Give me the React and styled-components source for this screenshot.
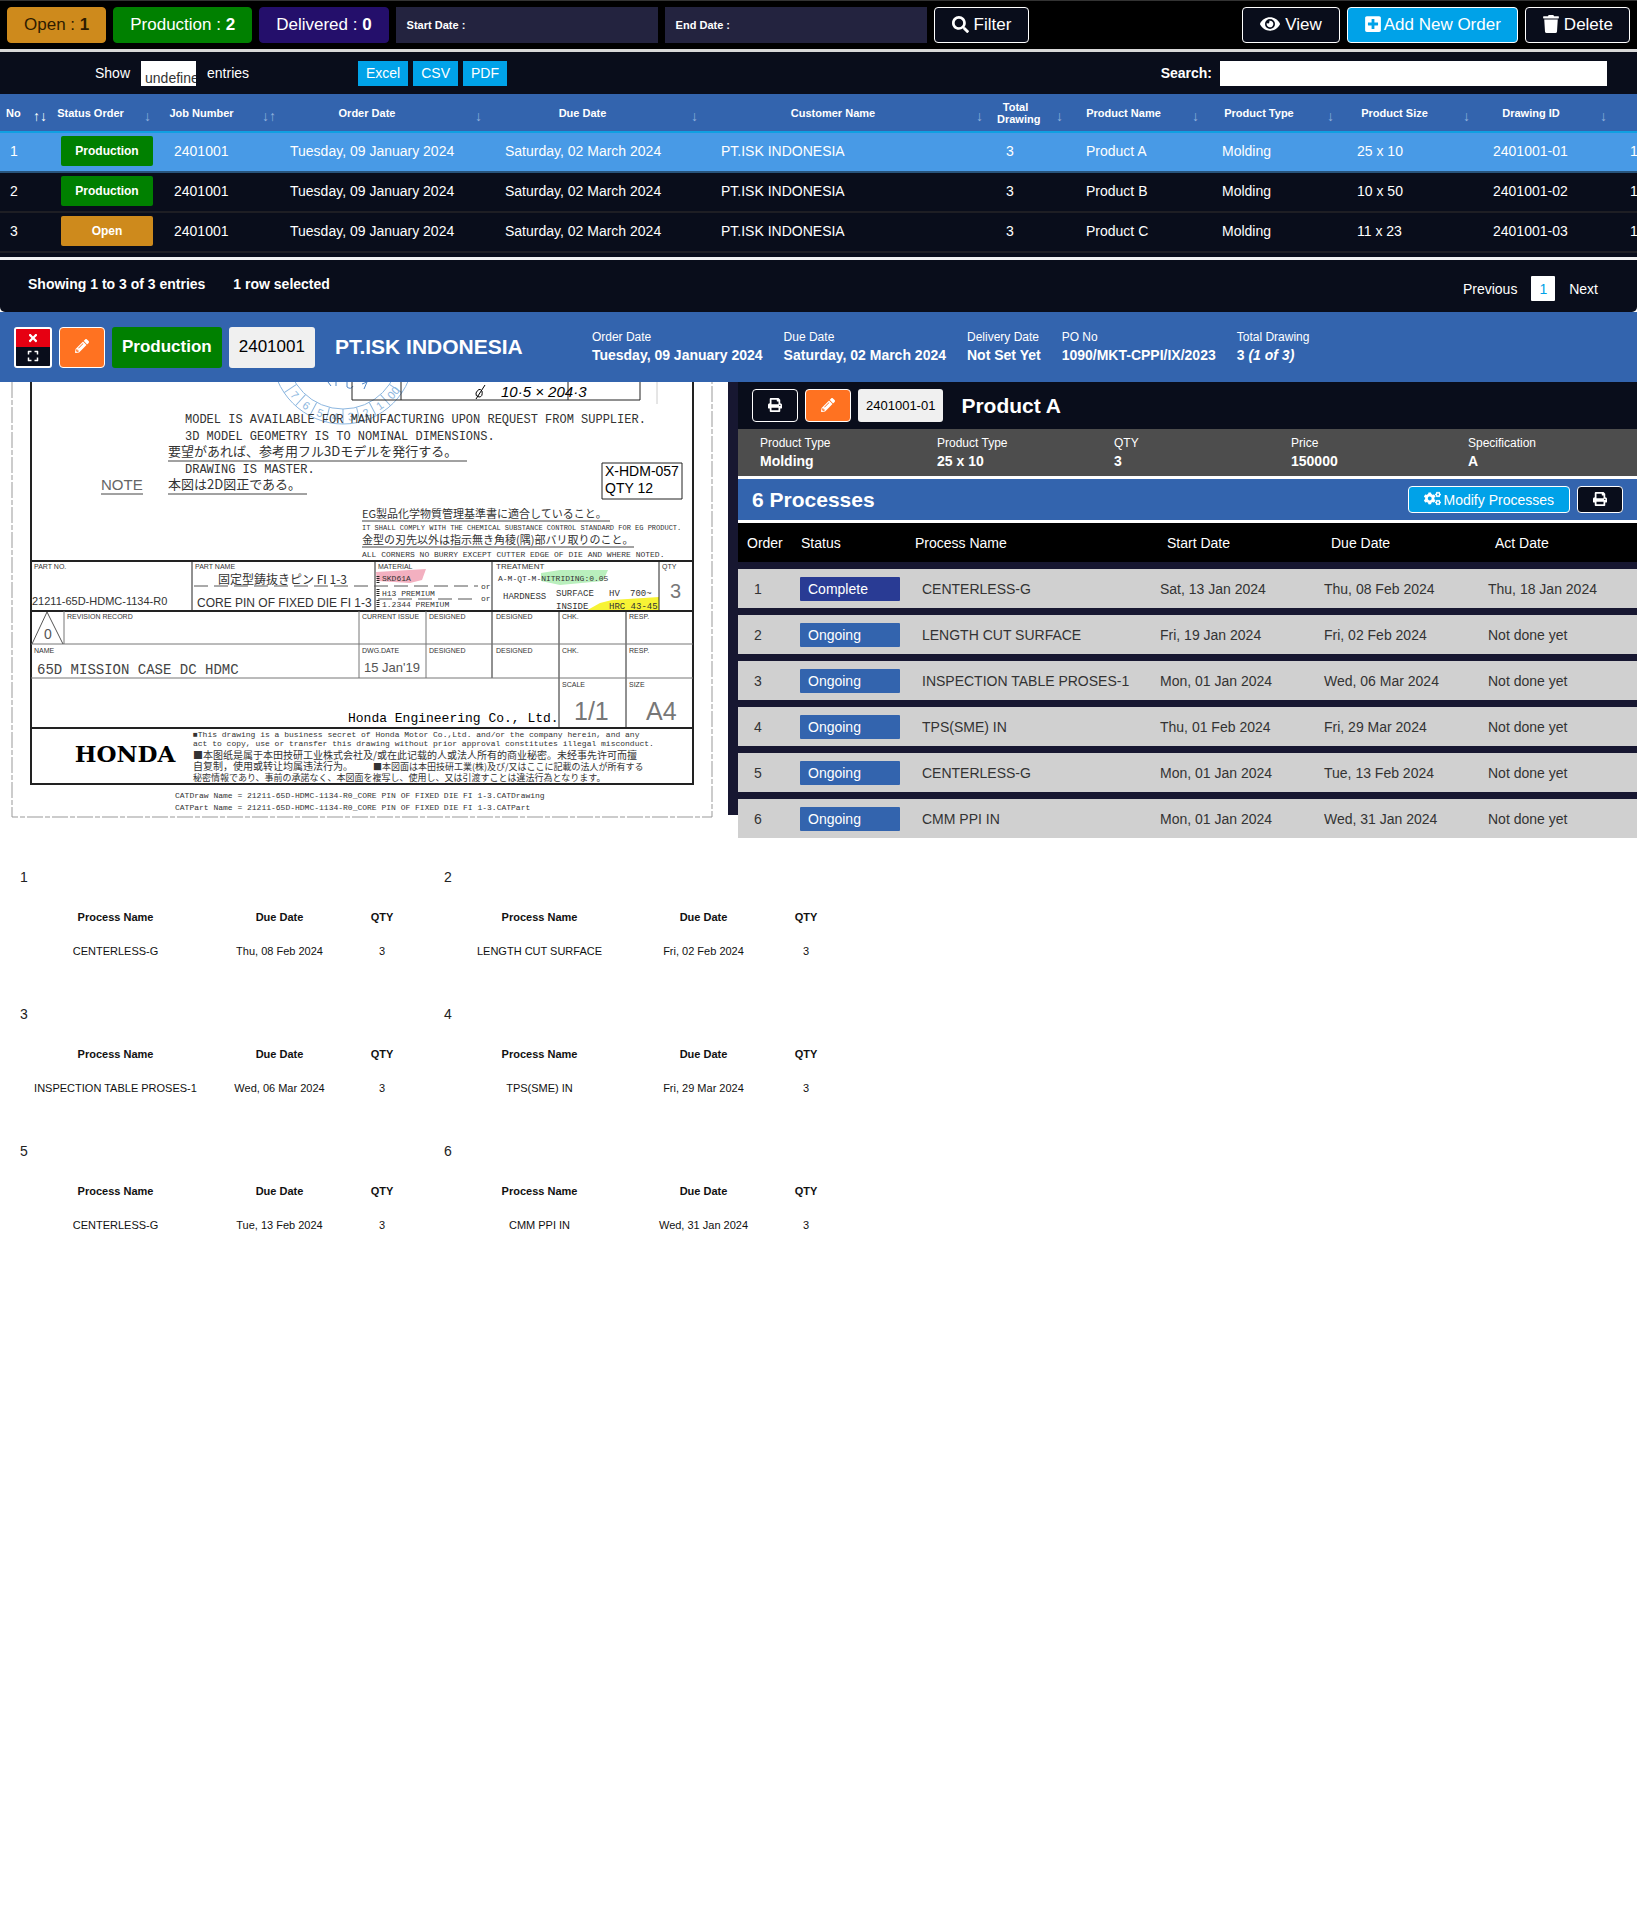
import React from "react";
import styled, { createGlobalStyle, css } from "styled-components";
import {
  FaSearch,
  FaEye,
  FaPlusSquare,
  FaTrash,
  FaPencilAlt,
  FaPrint,
  FaCogs,
  FaTimes,
  FaExpand,
} from "react-icons/fa";

const color = {
  night: "#090d1b",
  shade: "#171731",
  blue: "#3364ae",
  sky: "#00a2e8",
  orange: "#ff7221",
  green: "#008000",
  amber: "#ce8a1c",
  indigo: "#293b94",
  chip: "#f0f0f0",
};

const GlobalStyle = createGlobalStyle`
  * { box-sizing: border-box; }
  body {
    margin: 0;
    background: #fff;
    color: #222;
    font-family: "Liberation Sans", Arial, sans-serif;
    font-size: 14px;
    line-height: 16px;
  }
  button, input, select { font: inherit; margin: 0; }
  h1, h2, h3, p, dl, dd { margin: 0; }
`;

/* ---------- top bar ---------- */

const TopBar = styled.header`
  display: flex;
  align-items: center;
  gap: 7px;
  padding: 6px 7px;
  background: #000;
  border-top: 1px solid #333;
  border-bottom: 3px solid #d8d8d8;
`;

const Button = styled.button`
  display: inline-flex;
  align-items: center;
  justify-content: center;
  gap: ${(p) => p.$gap || 5}px;
  height: ${(p) => p.$height || 36}px;
  padding: 0 ${(p) => (p.$pad === undefined ? 16 : p.$pad)}px;
  border: 1px solid ${(p) => p.$line || "#fff"};
  border-radius: 4px;
  background: ${(p) => p.$bg || color.night};
  color: ${(p) => p.$ink || "#fff"};
  font-size: ${(p) => p.$size || 17}px;
  line-height: 20px;
  white-space: nowrap;
  cursor: pointer;
  svg { flex: none; margin-bottom: 2px; }
`;

const DateField = styled.label`
  display: flex;
  align-items: center;
  flex: 0 1 262px;
  height: 36px;
  padding: 0 11px;
  background: #23233f;
  color: #fff;
  font-size: 11px;
  font-weight: bold;
  white-space: nowrap;
`;

const BareInput = styled.input`
  flex: 1;
  min-width: 0;
  border: 0;
  background: transparent;
  color: #fff;
`;

const Spacer = styled.div`
  flex: 1;
`;

/* ---------- orders ---------- */

const OrdersPanel = styled.section`
  background: ${color.night};
  color: #fff;
  border-radius: 0 0 5px 5px;
  overflow: hidden;
`;

const Tools = styled.div`
  display: flex;
  align-items: center;
  height: 42px;
  padding-right: 30px;
  gap: 5px;
`;

const LengthLabel = styled.label`
  display: flex;
  align-items: center;
  gap: 11px;
  flex: 0 0 353px;
  padding-left: 95px;
`;

const LengthSelect = styled.select`
  appearance: none;
  width: 55px;
  height: 25px;
  padding: 9px 0 0 4px;
  border: 0;
  border-radius: 0;
  background: #fff;
  color: #333;
`;

const ExportButton = styled.button`
  height: 25px;
  padding: 0 8px;
  border: 0;
  background: ${color.sky};
  color: #fff;
`;

const SearchLabel = styled.label`
  display: flex;
  align-items: center;
  gap: 8px;
  font-weight: bold;
`;

const SearchInput = styled.input`
  width: 387px;
  height: 25px;
  border: 0;
  background: #fff;
`;

const Scroller = styled.div`
  overflow: hidden;
  padding-bottom: 4px;
  border-bottom: 3px solid #f2f2f2;
`;

const OrdersTable = styled.table`
  width: 1780px;
  table-layout: fixed;
  border-collapse: separate;
  border-spacing: 0;
`;

const OrderHead = styled.th`
  position: relative;
  height: 39px;
  padding: 0 ${(p) => (p.$first ? 0 : p.$tail || 42)}px 0 ${(p) => (p.$first ? 6 : 1)}px;
  border-bottom: 2px solid #0fa0e2;
  background: ${color.blue};
  font-size: 11px;
  line-height: 12px;
  text-align: ${(p) => (p.$first ? "left" : "center")};
  white-space: ${(p) => (p.$wrap ? "normal" : "nowrap")};
`;

const Arrows = styled.span`
  position: absolute;
  right: ${(p) => (p.$right === undefined ? 13 : p.$right)}px;
  bottom: 9px;
  color: ${(p) => (p.$active ? "#fff" : "#8fb0dd")};
  font-size: 14px;
  font-weight: normal;
`;

const OrderRow = styled.tr`
  background: ${(p) => (p.$selected ? "#489ae6" : "transparent")};
`;

const OrderCell = styled.td`
  height: 40px;
  padding: 0 0 2px 10px;
  border-bottom: 2px solid ${(p) => (p.$selected ? "#28547c" : "#1e1e24")};
  white-space: nowrap;
`;

const StatusTag = styled.span`
  display: flex;
  align-items: center;
  justify-content: center;
  width: 92px;
  height: 30px;
  border-radius: 2px;
  background: ${(p) => (p.$open ? color.amber : color.green)};
  font-size: 12px;
  font-weight: bold;
`;

const OrdersFooter = styled.footer`
  display: flex;
  align-items: flex-start;
  gap: 28px;
  height: 52px;
  padding: 16px 39px 0 28px;
  font-weight: bold;
`;

const Pager = styled.nav`
  display: flex;
  gap: 14px;
  margin-left: auto;
  font-weight: normal;
`;

const PageButton = styled.button`
  height: 25px;
  padding: 0 ${(p) => (p.$current ? 8 : 0)}px;
  border: 0;
  border-radius: 1px;
  background: ${(p) => (p.$current ? "#fff" : "transparent")};
  color: ${(p) => (p.$current ? color.sky : "#fff")};
`;

/* ---------- job header ---------- */

const JobHeader = styled.section`
  display: flex;
  align-items: center;
  gap: 7px;
  height: 70px;
  padding: 0 14px;
  background: ${color.blue};
  color: #fff;
`;

const WindowButtons = styled.div`
  display: flex;
  flex-direction: column;
  width: 38px;
  height: 41px;
  border: 2px solid #fff;
  border-radius: 3px;
  overflow: hidden;
`;

const WindowButton = styled.button`
  display: flex;
  flex: 1;
  align-items: center;
  justify-content: center;
  padding: 0;
  border: 0;
  background: ${(p) => (p.$close ? "#e60012" : color.night)};
  color: #fff;
`;

const Label = styled.span`
  display: inline-flex;
  align-items: center;
  height: ${(p) => (p.$small ? 33 : 41)}px;
  padding: 0 ${(p) => (p.$small ? 8 : 10)}px;
  border-radius: 3px;
  background: ${(p) => (p.$green ? color.green : color.chip)};
  color: ${(p) => (p.$green ? "#fff" : "#000")};
  font-size: ${(p) => (p.$small ? 13 : 17)}px;
  font-weight: ${(p) => (p.$green ? "bold" : "normal")};
`;

const Title = styled.h2`
  font-size: 21px;
  line-height: 24px;
  white-space: nowrap;
  ${(p) =>
    p.$customer &&
    css`
      flex: 0 0 250px;
      margin-left: 13px;
    `}
`;

const MetaList = styled.dl`
  display: flex;
  gap: 21px;
  padding-bottom: 2px;
`;

const SpecList = styled.dl`
  display: grid;
  grid-template-columns: repeat(5, 1fr);
  align-items: center;
  height: 47px;
  padding: 0 0 1px 14px;
  background: #4d4d4d;
  color: #fff;
`;

const Meta = styled.div`
  padding-left: ${(p) => p.$inset || 0}px;
  white-space: nowrap;
  dt { font-size: 12px; line-height: 17px; }
  dd { font-size: 14px; line-height: 18px; font-weight: bold; }
`;

/* ---------- workspace ---------- */

const Workspace = styled.main`
  display: grid;
  grid-template-columns: 728fr 909fr;
  grid-template-rows: 100%;
  height: 433px;
`;

const Sheet = styled.svg`
  display: block;
  align-self: start;
  width: 100%;
  background: #fff;
`;

const ProductPane = styled.section`
  padding-left: 10px;
  background: ${color.shade};
`;

const ProductBar = styled.div`
  display: flex;
  align-items: center;
  gap: 7px;
  height: 47px;
  padding-left: 14px;
  background: ${color.night};
  color: #fff;
  h2 { margin-left: 11px; }
`;

const ProcessBar = styled.div`
  display: flex;
  align-items: center;
  gap: 7px;
  height: 47px;
  padding: 0 14px;
  border: solid #fff;
  border-width: 3px 0;
  background: ${color.blue};
  color: #fff;
  h2 { margin-right: auto; }
`;

const ProcessTable = styled.table`
  width: 100%;
  table-layout: fixed;
  border-collapse: separate;
  border-spacing: 0;
  text-align: left;
`;

const ProcessHead = styled.th`
  height: 39px;
  padding: 0 0 0 ${(p) => p.$inset}px;
  background: #000;
  color: #fff;
  font-weight: normal;
`;

const ProcessCell = styled.td`
  height: 46px;
  padding: 0 0 0 ${(p) => p.$inset}px;
  border-top: 7px solid ${color.shade};
  background: #d0d0d0;
  color: #333;
  white-space: nowrap;
`;

const ProcessTag = styled.span`
  display: block;
  width: 100px;
  padding-left: 8px;
  border-radius: 1px;
  background: ${(p) => (p.$done ? color.indigo : color.blue)};
  color: #fff;
  line-height: 24px;
`;

/* ---------- routing cards ---------- */

const CardGrid = styled.section`
  display: grid;
  grid-template-columns: repeat(2, 424px);
  padding: 54px 20px 0;
`;

const Card = styled.article`
  height: 137px;
`;

const CardTable = styled.table`
  margin: 15px 0 0 7px;
  table-layout: fixed;
  border-collapse: collapse;
  width: 382px;
  color: #111;
  font-size: 11px;
  text-align: center;
  th, td { height: 34px; padding: 0; }
`;

/* ---------- data ---------- */

const orderColumns = [
  { name: "No", width: 51, arrow: "↑↓", right: 4, first: true, active: true },
  { name: "Status Order", width: 113, arrow: "↓", tail: 35 },
  { name: "Job Number", width: 116, arrow: "↓↑", right: 4 },
  { name: "Order Date", width: 215, arrow: "↓" },
  { name: "Due Date", width: 216, arrow: "↓" },
  { name: "Customer Name", width: 285, arrow: "↓" },
  { name: "Total Drawing", width: 80, arrow: "↓", wrap: true },
  { name: "Product Name", width: 136, arrow: "↓" },
  { name: "Product Type", width: 135, arrow: "↓" },
  { name: "Product Size", width: 136, arrow: "↓" },
  { name: "Drawing ID", width: 137, arrow: "↓" },
  { name: "", width: 160, arrow: "" },
];

const orders = [
  ["1", "Production", "Product A", "25 x 10", "2401001-01"],
  ["2", "Production", "Product B", "10 x 50", "2401001-02"],
  ["3", "Open", "Product C", "11 x 23", "2401001-03"],
];

const jobMeta = [
  ["Order Date", "Tuesday, 09 January 2024"],
  ["Due Date", "Saturday, 02 March 2024"],
  ["Delivery Date", "Not Set Yet"],
  ["PO No", "1090/MKT-CPPI/IX/2023"],
];

const specs = [
  ["Product Type", "Molding"],
  ["Product Type", "25 x 10"],
  ["QTY", "3"],
  ["Price", "150000"],
  ["Specification", "A"],
];

const processes = [
  ["Complete", "CENTERLESS-G", "Sat, 13 Jan 2024", "Thu, 08 Feb 2024", "Thu, 18 Jan 2024"],
  ["Ongoing", "LENGTH CUT SURFACE", "Fri, 19 Jan 2024", "Fri, 02 Feb 2024", "Not done yet"],
  ["Ongoing", "INSPECTION TABLE PROSES-1", "Mon, 01 Jan 2024", "Wed, 06 Mar 2024", "Not done yet"],
  ["Ongoing", "TPS(SME) IN", "Thu, 01 Feb 2024", "Fri, 29 Mar 2024", "Not done yet"],
  ["Ongoing", "CENTERLESS-G", "Mon, 01 Jan 2024", "Tue, 13 Feb 2024", "Not done yet"],
  ["Ongoing", "CMM PPI IN", "Mon, 01 Jan 2024", "Wed, 31 Jan 2024", "Not done yet"],
];

/* ---------- engineering drawing ---------- */

const families = {
  mono: '"Liberation Mono", "Noto Sans CJK JP", monospace',
  sans: '"Liberation Sans", "Noto Sans CJK JP", sans-serif',
  jp: '"Noto Sans CJK JP", sans-serif',
  sc: '"Noto Sans CJK SC", sans-serif',
  slab: '"DejaVu Serif", serif',
};

const Ink = styled.text`
  font-family: ${(p) => families[p.$face || "mono"]};
  font-size: ${(p) => p.$size}px;
  font-weight: ${(p) => p.$weight || 400};
  fill: ${(p) => p.$ink || "#333"};
  white-space: pre;
`;

const Stroke = styled.path`
  fill: none;
  stroke: ${(p) => p.$ink || "#222"};
  stroke-width: ${(p) => p.$width || 1}px;
  stroke-dasharray: ${(p) => p.$dash || "none"};
`;

// [x, baseline, size, face, text, ink]
const notes = [
  [185, 41, 12, "mono", "MODEL IS AVAILABLE FOR MANUFACTURING UPON REQUEST FROM SUPPLIER."],
  [185, 58, 12, "mono", "3D MODEL GEOMETRY IS TO NOMINAL DIMENSIONS."],
  [168, 74, 13, "jp", "要望があれば、参考用フル3Dモデルを発行する。"],
  [185, 91, 12, "mono", "DRAWING IS MASTER."],
  [101, 108, 15, "sans", "NOTE", "#666"],
  [168, 107, 13, "jp", "本図は2D図正である。"],
  [605, 94, 14, "sans", "X-HDM-057", "#000"],
  [605, 111, 14, "sans", "QTY 12", "#000"],
  [362, 136, 11, "jp", "EG製品化学物質管理基準書に適合していること。"],
  [362, 148, 7, "mono", "IT SHALL COMPLY WITH THE CHEMICAL SUBSTANCE CONTROL STANDARD FOR EG PRODUCT."],
  [362, 162, 11, "jp", "金型の刃先以外は指示無き角稜(隅)部バリ取りのこと。"],
  [362, 175, 8, "mono", "ALL CORNERS NO BURRY EXCEPT CUTTER EDGE OF DIE AND WHERE NOTED."],
  [34, 187, 7, "sans", "PART NO."],
  [195, 187, 7, "sans", "PART NAME"],
  [378, 187, 7, "sans", "MATERIAL"],
  [496, 187, 8, "sans", "TREATMENT"],
  [662, 187, 7, "sans", "QTY"],
  [218, 202, 12, "jp", "固定型鋳抜きピン FI 1-3"],
  [32, 223, 11, "sans", "21211-65D-HDMC-1134-R0"],
  [197, 225, 12, "sans", "CORE PIN OF FIXED DIE FI 1-3"],
  [382, 199, 8, "mono", "SKD61A"],
  [382, 214, 8, "mono", "H13 PREMIUM"],
  [382, 225, 8, "mono", "1.2344 PREMIUM"],
  [481, 207, 8, "mono", "or"],
  [481, 219, 8, "mono", "or"],
  [498, 199, 8, "mono", "A-M-QT-M-NITRIDING:0.05"],
  [503, 217, 9, "mono", "HARDNESS"],
  [556, 214, 9, "mono", "SURFACE"],
  [609, 214, 9, "mono", "HV"],
  [630, 214, 9, "mono", "700~"],
  [556, 227, 9, "mono", "INSIDE"],
  [609, 227, 9, "mono", "HRC 43-45"],
  [670, 216, 20, "sans", "3", "#777"],
  [67, 237, 7, "sans", "REVISION RECORD"],
  [362, 237, 7, "sans", "CURRENT ISSUE"],
  [429, 237, 7, "sans", "DESIGNED"],
  [496, 237, 7, "sans", "DESIGNED"],
  [562, 237, 7, "sans", "CHK."],
  [629, 237, 7, "sans", "RESP."],
  [34, 271, 7, "sans", "NAME"],
  [362, 271, 7, "sans", "DWG.DATE"],
  [429, 271, 7, "sans", "DESIGNED"],
  [496, 271, 7, "sans", "DESIGNED"],
  [562, 271, 7, "sans", "CHK."],
  [629, 271, 7, "sans", "RESP."],
  [44, 257, 14, "sans", "0", "#555"],
  [37, 292, 14, "mono", "65D MISSION CASE DC HDMC", "#444"],
  [364, 290, 13, "sans", "15 Jan'19", "#555"],
  [562, 305, 7, "sans", "SCALE"],
  [629, 305, 7, "sans", "SIZE"],
  [574, 338, 25, "sans", "1/1", "#777"],
  [646, 338, 25, "sans", "A4", "#777"],
  [348, 340, 13, "mono", "Honda Engineering Co., Ltd.", "#000"],
  [193, 355, 8, "mono", "■This drawing is a business secret of Honda Motor Co.,Ltd. and/or the company herein, and any"],
  [193, 364, 8, "mono", "act to copy, use or transfer this drawing without prior approval constitutes illegal misconduct."],
  [193, 377, 10, "sc", "■本图纸是属于本田技研工业株式会社及/或在此记载的人或法人所有的商业秘密。未经事先许可而擅"],
  [193, 388, 10, "sc", "自复制，使用或转让均属违法行为。"],
  [373, 388, 9, "jp", "■本図面は本田技研工業(株)及び/又はここに記載の法人が所有する"],
  [193, 399, 9, "jp", "秘密情報であり、事前の承諾なく、本図面を複写し、使用し、又は引渡すことは違法行為となります。"],
  [175, 416, 8, "mono", "CATDraw Name = 21211-65D-HDMC-1134-R0_CORE PIN OF FIXED DIE FI 1-3.CATDrawing"],
  [175, 428, 8, "mono", "CATPart Name = 21211-65D-HDMC-1134-R0_CORE PIN OF FIXED DIE FI 1-3.CATPart"],
];

const stampDigits = ["7", "6", "5", "4", "3", "2", "1", "00"];

function Drawing() {
  return (
    <Sheet viewBox="0 0 728 440" role="img" aria-label="Part drawing 21211-65D-HDMC-1134-R0">
      {/* highlighter marks */}
      <path d="M376 190 L426 187 L422 198 L410 201 L377 199 Z" fill="#f3b0c0" />
      <path d="M541 191 L560 188 L608 188 L603 199 L560 203 L541 199 Z" fill="#b9efbd" />
      <path d="M584 230 L600 221 L612 218 L659 215 L659 229 Z" fill="#f7f335" />

      {/* rubber stamp */}
      <circle cx="343" cy="-29" r="71" fill="none" stroke="#8db7e0" />
      <circle cx="343" cy="-29" r="56" fill="none" stroke="#8db7e0" />
      {[0, 1, 2, 3, 4, 5, 6, 7, 8].map((i) => (
        <g key={i} transform={`rotate(${56 - i * 14} 343 -29)`}>
          <Stroke d="M343 27 V42" $ink="#8db7e0" />
        </g>
      ))}
      {stampDigits.map((digit, i) => (
        <g key={digit} transform={`rotate(${49 - i * 14} 343 -29)`}>
          <Ink x="340" y="39" $size={11} $face="sans" $ink="#8db7e0">{digit}</Ink>
        </g>
      ))}
      <Stroke d="M328 0 l3 4 M336 0 v4 M347 0 v5 q4 3 6 -1 M362 2 l5 -2 l-3 7" $ink="#4f86c6" />

      {/* sheet border */}
      <Stroke d="M12 0 V435 H712 V0" $ink="#999" $dash="16 2 5 2" />
      <Stroke d="M31 0 V402 H693 V0" $width={2} />
      <Stroke d="M352 0 V18 H640 V0 M401 0 V18 M568 0 V18" />
      <Stroke d="M657 0 V22" $ink="#ccc" />

      {/* handwritten size */}
      <Stroke d="M476 11 q3 -6 6 -2 q1 6 -3 6 q-4 -1 -3 -4 M485 3 L476 17" $ink="#000" />
      <Ink x="501" y="15" $size={15} $face="sans" $ink="#000" fontStyle="italic">10·5 × 204·3</Ink>

      {/* note underlines and part label */}
      <Stroke d="M168 79 H467 M168 112 H307 M101 112 H143 M362 139 H610 M362 165 H634" $ink="#444" />
      <Stroke d="M602 81 H682 V117 H602 Z" />

      {/* title block */}
      <Stroke d="M31 179 H693 M31 229 H693 M31 346 H693" $width={2} />
      <Stroke d="M192 179 V229 M375 179 V229 M492 179 V296 M659 179 V229 M559 229 V346 M626 229 V346" />
      <Stroke d="M31 262 H693 M31 296 H693 M64 229 V262 M359 229 V296 M426 229 V296" $ink="#777" />
      <Stroke d="M32 262 L47 230 L63 262" $ink="#555" />
      <Stroke d="M194 204 H478 M378 217 H478" $ink="#555" $dash="14 6" />
      <Stroke d="M378 194 V201 M378 207 V215 M378 218 V226" $width={3} $dash="1 1" />

      {notes.map(([x, y, size, face, text, ink]) => (
        <Ink key={`${x}-${y}`} x={x} y={y} $size={size} $face={face} $ink={ink}>
          {text}
        </Ink>
      ))}
      <Ink x="125" y="380" textAnchor="middle" $size={23} $face="slab" $weight={700} $ink="#000">
        HONDA
      </Ink>
    </Sheet>
  );
}

/* ---------- page ---------- */

function Orders() {
  return (
    <OrdersPanel>
      <Tools>
        <LengthLabel>
          Show
          <LengthSelect defaultValue="undefined">
            <option value="undefined">undefined</option>
          </LengthSelect>
          entries
        </LengthLabel>
        <ExportButton>Excel</ExportButton>
        <ExportButton>CSV</ExportButton>
        <ExportButton>PDF</ExportButton>
        <Spacer />
        <SearchLabel>
          Search:
          <SearchInput type="search" />
        </SearchLabel>
      </Tools>
      <Scroller>
        <OrdersTable>
          <colgroup>
            {orderColumns.map((c) => (
              <col key={c.name} style={{ width: c.width }} />
            ))}
          </colgroup>
          <thead>
            <tr>
              {orderColumns.map((c) => (
                <OrderHead key={c.name} scope="col" $first={c.first} $wrap={c.wrap} $tail={c.tail}>
                  {c.name}
                  <Arrows aria-hidden="true" $right={c.right} $active={c.active}>
                    {c.arrow}
                  </Arrows>
                </OrderHead>
              ))}
            </tr>
          </thead>
          <tbody>
            {orders.map(([no, status, product, size, drawing], i) => {
              const selected = i === 0;
              const rest = ["2401001", "Tuesday, 09 January 2024", "Saturday, 02 March 2024", "PT.ISK INDONESIA", "3", product, "Molding", size, drawing, "1090/MKT-CPPI/IX/2023"];
              return (
                <OrderRow key={no} $selected={selected}>
                  <OrderCell $selected={selected}>{no}</OrderCell>
                  <OrderCell $selected={selected}>
                    <StatusTag $open={status === "Open"}>{status}</StatusTag>
                  </OrderCell>
                  {rest.map((text) => (
                    <OrderCell key={text} $selected={selected}>{text}</OrderCell>
                  ))}
                </OrderRow>
              );
            })}
          </tbody>
        </OrdersTable>
      </Scroller>
      <OrdersFooter>
        <span>Showing 1 to 3 of 3 entries</span>
        <span>1 row selected</span>
        <Pager aria-label="Order pages">
          <PageButton>Previous</PageButton>
          <PageButton $current aria-current="page">1</PageButton>
          <PageButton>Next</PageButton>
        </Pager>
      </OrdersFooter>
    </OrdersPanel>
  );
}

function Processes() {
  return (
    <ProcessTable>
      <colgroup>
        <col style={{ width: 54 }} />
        <col style={{ width: 115 }} />
        <col />
        <col style={{ width: 164 }} />
        <col style={{ width: 164 }} />
        <col style={{ width: 156 }} />
      </colgroup>
      <thead>
        <tr>
          <ProcessHead scope="col" $inset={9}>Order</ProcessHead>
          <ProcessHead scope="col" $inset={9}>Status</ProcessHead>
          <ProcessHead scope="col" $inset={8}>Process Name</ProcessHead>
          <ProcessHead scope="col" $inset={14}>Start Date</ProcessHead>
          <ProcessHead scope="col" $inset={14}>Due Date</ProcessHead>
          <ProcessHead scope="col" $inset={14}>Act Date</ProcessHead>
        </tr>
      </thead>
      <tbody>
        {processes.map(([status, name, start, due, act], i) => (
          <tr key={i}>
            <ProcessCell $inset={16}>{i + 1}</ProcessCell>
            <ProcessCell $inset={8}>
              <ProcessTag $done={status === "Complete"}>{status}</ProcessTag>
            </ProcessCell>
            <ProcessCell $inset={15}>{name}</ProcessCell>
            <ProcessCell $inset={7}>{start}</ProcessCell>
            <ProcessCell $inset={7}>{due}</ProcessCell>
            <ProcessCell $inset={7}>{act}</ProcessCell>
          </tr>
        ))}
      </tbody>
    </ProcessTable>
  );
}

export default function App() {
  return (
    <>
      <GlobalStyle />
      <TopBar>
        <Button $bg={color.amber} $line={color.amber} $ink="#2e1c00">
          <span>Open : <b>1</b></span>
        </Button>
        <Button $bg={color.green} $line={color.green}>
          <span>Production : <b>2</b></span>
        </Button>
        <Button $bg="#240f6b" $line="#240f6b">
          <span>Delivered : <b>0</b></span>
        </Button>
        <DateField>
          Start Date :
          <BareInput type="text" />
        </DateField>
        <DateField>
          End Date :
          <BareInput type="text" />
        </DateField>
        <Button $pad={17}><FaSearch />Filter</Button>
        <Spacer />
        <Button $pad={17}><FaEye size={20} />View</Button>
        <Button $bg={color.sky} $gap={2}><FaPlusSquare size={18} />Add New Order</Button>
        <Button $gap={4}><FaTrash size={18} />Delete</Button>
      </TopBar>

      <Orders />

      <JobHeader>
        <WindowButtons>
          <WindowButton $close aria-label="Close"><FaTimes size={12} /></WindowButton>
          <WindowButton aria-label="Expand"><FaExpand size={12} /></WindowButton>
        </WindowButtons>
        <Button $bg={color.orange} $height={41} $pad={15} aria-label="Edit order">
          <FaPencilAlt size={14} />
        </Button>
        <Label $green>Production</Label>
        <Label>2401001</Label>
        <Title $customer>PT.ISK INDONESIA</Title>
        <MetaList>
          {jobMeta.map(([name, value]) => (
            <Meta key={name}>
              <dt>{name}</dt>
              <dd>{value}</dd>
            </Meta>
          ))}
          <Meta>
            <dt>Total Drawing</dt>
            <dd>3 <i>(1 of 3)</i></dd>
          </Meta>
        </MetaList>
      </JobHeader>

      <Workspace>
        <Drawing />
        <ProductPane>
          <ProductBar>
            <Button $height={33} $pad={15} aria-label="Print product"><FaPrint size={14} /></Button>
            <Button $height={33} $pad={15} $bg={color.orange} aria-label="Edit product">
              <FaPencilAlt size={14} />
            </Button>
            <Label $small>2401001-01</Label>
            <Title>Product A</Title>
          </ProductBar>
          <SpecList>
            {specs.map(([name, value], i) => (
              <Meta key={i} $inset={8}>
                <dt>{name}</dt>
                <dd>{value}</dd>
              </Meta>
            ))}
          </SpecList>
          <ProcessBar>
            <Title>6 Processes</Title>
            <Button $bg={color.sky} $height={27} $size={14} $pad={15} $gap={3}>
              <FaCogs size={17} />Modify Processes
            </Button>
            <Button $height={27} $pad={15} aria-label="Print processes"><FaPrint size={14} /></Button>
          </ProcessBar>
          <Processes />
        </ProductPane>
      </Workspace>

      <CardGrid>
        {processes.map(([, name, , due], i) => (
          <Card key={i}>
            <p>{i + 1}</p>
            <CardTable>
              <colgroup>
                <col style={{ width: 177 }} />
                <col style={{ width: 151 }} />
                <col style={{ width: 54 }} />
              </colgroup>
              <thead>
                <tr>
                  <th scope="col">Process Name</th>
                  <th scope="col">Due Date</th>
                  <th scope="col">QTY</th>
                </tr>
              </thead>
              <tbody>
                <tr>
                  <td>{name}</td>
                  <td>{due}</td>
                  <td>3</td>
                </tr>
              </tbody>
            </CardTable>
          </Card>
        ))}
      </CardGrid>
    </>
  );
}
